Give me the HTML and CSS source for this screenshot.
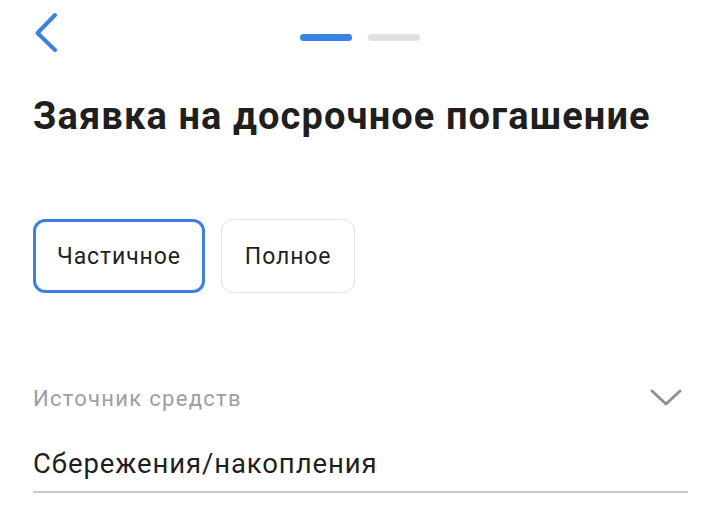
FILE: index.html
```html
<!DOCTYPE html>
<html lang="ru">
<head>
  <meta charset="UTF-8" />
  <meta name="viewport" content="width=device-width, initial-scale=1.0"/>
  <title>Заявка на досрочное погашение</title>
  <link rel="stylesheet" href="styles.css">
</head>
<body>

  <div class="topbar">
    <button class="back" aria-label="Назад">
      <svg width="26" height="40" viewBox="0 0 26 40">
        <path d="M22 3 L4.5 21 L22 38" fill="none" stroke="#3d80e0" stroke-width="4" stroke-linecap="round" stroke-linejoin="round"/>
      </svg>
    </button>
    <div class="steps">
      <span class="step active"></span>
      <span class="step"></span>
    </div>
  </div>

  <h1>Заявка на досрочное погашение</h1>

  <div class="options">
    <button class="option selected">Частичное</button>
    <button class="option">Полное</button>
  </div>

  <div class="field">
    <div class="field-head">
      <span class="field-label">Источник средств</span>
      <svg width="34" height="20" viewBox="0 0 34 20">
        <path d="M3 3 L17 16 L31 3" fill="none" stroke="#8f9198" stroke-width="3" stroke-linecap="round" stroke-linejoin="round"/>
      </svg>
    </div>
    <div class="field-value">Сбережения/накопления</div>
  </div>

</body>
</html>
```

FILE: styles.css
```css
body {
  margin: 0;
  padding: 0 28px 0 33px;
  font-family: Roboto, "Noto Sans", sans-serif;
  background: #fff;
  color: #1f1f1f;
}
.topbar {
  position: relative;
  height: 70px;
  display: flex;
  align-items: center;
  justify-content: center;
}
.back {
  position: absolute;
  left: 0;
  top: 12px;
  padding: 0;
  border: none;
  background: none;
  cursor: pointer;
}
.back svg {
  display: block;
}
.steps {
  display: flex;
  gap: 16px;
  margin-left: -2px;
  margin-top: 5px;
}
.step {
  width: 52px;
  height: 7px;
  border-radius: 4px;
  background: #dfe1e5;
}
.step.active {
  background: #3b82e6;
}
h1 {
  margin: 23px 0 0;
  font-size: 38px;
  font-weight: 700;
  line-height: 46px;
  letter-spacing: 1.1px;
}
.options {
  display: flex;
  gap: 16px;
  margin-top: 80px;
}
.option {
  height: 74px;
  padding: 0 23px;
  font-family: inherit;
  font-size: 23px;
  letter-spacing: 0.9px;
  color: #1f1f1f;
  background: #fff;
  border: 1px solid #e2e2e4;
  border-radius: 12px;
  cursor: pointer;
}
.option.selected {
  border: 3px solid #3d80e0;
  padding: 0 21px;
}
.field {
  margin-top: 90px;
  border-bottom: 2px solid #c8c8cc;
}
.field-head {
  display: flex;
  justify-content: space-between;
  align-items: center;
  height: 30px;
}
.field-label {
  font-size: 22px;
  letter-spacing: 1.3px;
  color: #9c9ea5;
}
.field-head svg {
  margin-right: 5px;
}
.field-value {
  margin-top: 34px;
  padding-bottom: 10px;
  font-size: 27.5px;
  letter-spacing: 0.9px;
  line-height: 34px;
}
```
